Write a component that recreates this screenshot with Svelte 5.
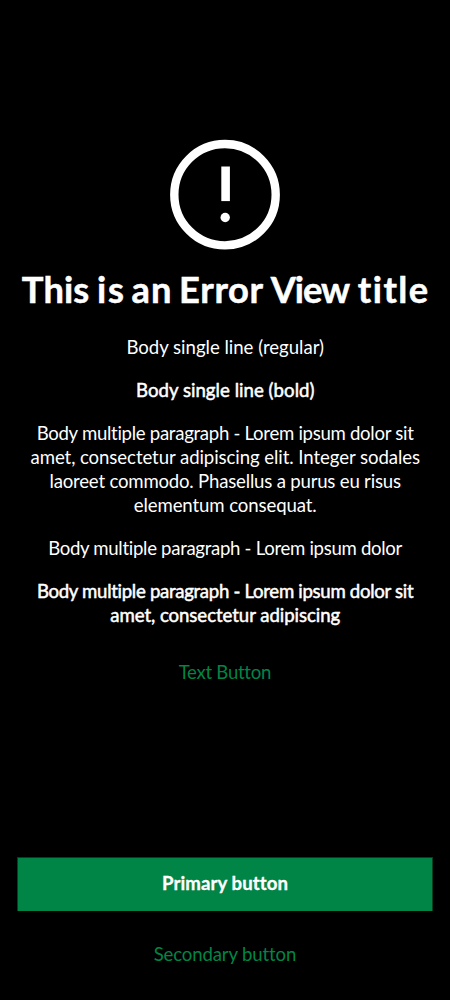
<script>
  const title = [
    ['This', 67.5],
    ['is', 27],
    ['an', 40],
    ['Error', 84],
    ['View', 79.5],
    ['title', 71]
  ];

  const paragraphs = [
    { lines: [['Body single line (regular)', 197.5]] },
    { bold: true, lines: [['Body single line (bold)', 178.5]] },
    {
      lines: [
        ['Body multiple paragraph - Lorem ipsum dolor sit', 377.5],
        ['amet, consectetur adipiscing elit. Integer sodales', 389.5],
        ['laoreet commodo. Phasellus a purus eu risus', 351.5],
        ['elementum consequat.', 183]
      ]
    },
    { lines: [['Body multiple paragraph - Lorem ipsum dolor', 354.5]] },
    {
      bold: true,
      lines: [
        ['Body multiple paragraph - Lorem ipsum dolor sit', 377],
        ['amet, consectetur adipiscing', 230]
      ]
    }
  ];

  // Tracks a line of text out (or in) to the given measure.
  function track(node, width) {
    const spacing = (width - node.getBoundingClientRect().width) / (node.textContent.length - 1);
    node.style.letterSpacing = `${spacing}px`;
    node.style.marginRight = `${-spacing}px`;
  }
</script>

<main class="screen">
  <section class="content">
    <svg class="icon" viewBox="0 0 112 112" aria-hidden="true">
      <circle cx="56" cy="55.7" r="50.7" fill="none" stroke="#fff" stroke-width="8.4" />
      <path d="M52.3 27.5h8.6v34.6h-8.6z" fill="#fff" />
      <circle cx="56.2" cy="78.5" r="4.7" fill="#fff" />
    </svg>
    <h1>
      {#each title as [word, width]}
        <span use:track={width}>{word}</span>{' '}
      {/each}
    </h1>
    <div class="body">
      {#each paragraphs as paragraph}
        <p class:bold={paragraph.bold}>
          {#each paragraph.lines as [text, width]}
            <span class="line"><span use:track={width}>{text}</span></span>
          {/each}
        </p>
      {/each}
    </div>
    <button class="link"><span use:track={92}>Text Button</span></button>
  </section>
  <footer>
    <button class="primary"><span use:track={125}>Primary button</span></button>
    <button class="link secondary"><span use:track={142}>Secondary button</span></button>
  </footer>
</main>

<style>
  :global(body) {
    margin: 0;
    background: #000;
  }

  .screen {
    box-sizing: border-box;
    height: 1000px;
    padding: 139px 17px 0;
    display: flex;
    flex-direction: column;
    justify-content: space-between;
    background: #000;
    color: #fff;
    font: 18.6px/24px Lato, 'Noto Sans', sans-serif;
    text-align: center;
    white-space: nowrap;
  }

  span {
    display: inline-block;
  }

  .content {
    display: flex;
    flex-direction: column;
    align-items: center;
  }

  .icon {
    width: 112px;
    height: 112px;
  }

  h1 {
    display: flex;
    gap: 7.6px;
    margin: 16px 0 0;
    font-size: 36.3px;
    line-height: 44px;
    font-weight: 700;
    -webkit-text-stroke: 0.5px #fff;
  }

  .body {
    display: flex;
    flex-direction: column;
    gap: 19px;
    margin: 24px 0 0 0.5px;
  }

  p {
    margin: 0;
  }

  .line {
    display: block;
  }

  .bold {
    -webkit-text-stroke: 0.5px #fff;
  }

  button {
    border: 0;
    padding: 0;
    background: none;
    font: inherit;
    color: #008547;
  }

  .link {
    height: 54px;
    margin-top: 18px;
  }

  footer {
    display: flex;
    flex-direction: column;
    height: 143px;
  }

  .primary {
    height: 54px;
    padding-bottom: 3px;
    border: solid #004323;
    border-width: 1px 1px 0;
    background: #008547;
    color: #fff;
    font-weight: 700;
    -webkit-text-stroke: 0.3px #fff;
  }

  .secondary {
    margin-top: 16px;
  }
</style>
